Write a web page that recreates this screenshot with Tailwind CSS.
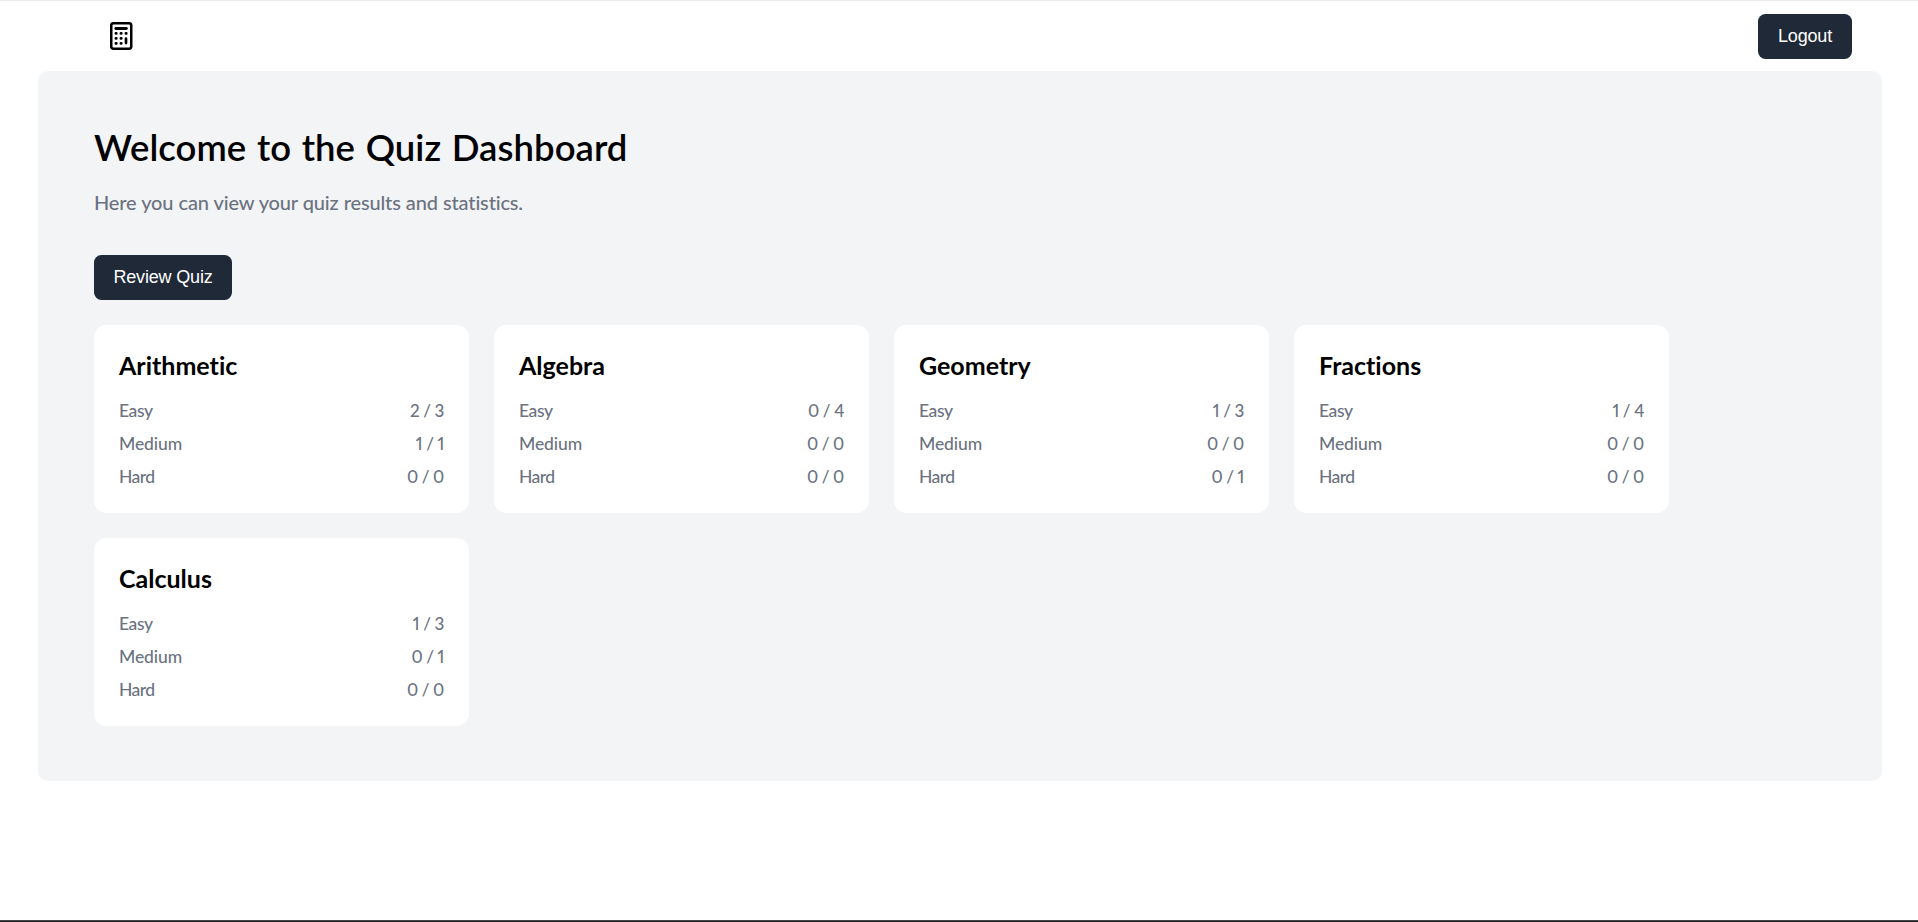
<!DOCTYPE html>
<html lang="en">
<head>
<meta charset="utf-8">
<title>Quiz Dashboard</title>
<script src="https://cdn.jsdelivr.net/npm/@tailwindcss/browser@4"></script>
</head>
<body class="flex h-screen flex-col overflow-hidden bg-white font-['Lato',sans-serif] text-black [font-variant-ligatures:none]">
  <header class="flex h-[71px] shrink-0 items-center justify-between border-t border-[#ebebef] pr-[66px] pl-[110px]">
    <svg class="h-7 w-[23px]" viewBox="0 0 23 28" fill="none" stroke="#000">
      <rect x="1.25" y="1.25" width="20" height="25.5" rx="2.2" stroke-width="2.5"/>
      <path d="M5.8 6.5h10.6" stroke-width="2.8" stroke-linecap="round"/>
      <path d="M5.9 11.4h.4M10.9 11.4h.4M15.9 11.4h.4M5.9 16.4h.4M10.9 16.4h.4M5.9 21.4h.4M10.9 21.4h.4M16 16.7v4.4" stroke-width="2.7" stroke-linecap="round"/>
    </svg>
    <button class="h-[45px] w-[94px] rounded-[7.5px] bg-[#1f2937] font-['Liberation_Sans',Arial,sans-serif] text-[18px] tracking-[-0.15px] text-white">Logout</button>
  </header>

  <main class="mr-9 ml-[38px] h-[710px] shrink-0 rounded-[10px] bg-[#f3f4f6] px-14 pt-[54px]">
    <h1 class="text-[36.5px] leading-[45px] font-semibold tracking-[0.05px] [word-spacing:1.5px]">Welcome to the Quiz Dashboard</h1>
    <p class="mt-[20px] text-[20px] leading-6 font-medium tracking-[-0.16px] text-[#6b7280] [word-spacing:0.3px]">Here you can view your quiz results and statistics.</p>
    <button class="mt-[41px] block h-[45px] w-[138px] rounded-[7.5px] bg-[#1f2937] font-['Liberation_Sans',Arial,sans-serif] text-[18px] tracking-[-0.17px] text-white">Review Quiz</button>

    <div id="cards" class="mt-[25px] flex flex-wrap gap-[25px]"></div>
  </main>

  <div class="mt-auto h-0.5 shrink-0 border-t border-[#48484a] bg-[#1c1c1e]"></div>

  <script>
    const topics = [
      ['Arithmetic', '2 / 3', '1 / 1', '0 / 0'],
      ['Algebra', '0 / 4', '0 / 0', '0 / 0'],
      ['Geometry', '1 / 3', '0 / 0', '0 / 1'],
      ['Fractions', '1 / 4', '0 / 0', '0 / 0'],
      ['Calculus', '1 / 3', '0 / 1', '0 / 0'],
    ];
    const row = (label, tracking, score) => `
      <div class="flex justify-between"><span class="${tracking}">${label}</span><span class="text-[17px] tracking-[-0.35px] proportional-nums">${score}</span></div>`;
    document.getElementById('cards').innerHTML = topics.map(([name, easy, medium, hard]) => `
      <section class="h-[188px] w-[375px] rounded-[12.5px] bg-white px-[25px] pt-[25px]">
        <h2 class="text-[25px] leading-[30px] font-bold">${name}</h2>
        <div class="mt-[19.5px] flex flex-col gap-[12.4px] text-[17.5px] leading-[21px] font-medium text-[#6b7280]">
          ${row('Easy', 'tracking-[-0.4px]', easy)}${row('Medium', 'tracking-[-0.1px]', medium)}${row('Hard', 'tracking-[-0.6px]', hard)}
        </div>
      </section>`).join('');
  </script>
</body>
</html>
